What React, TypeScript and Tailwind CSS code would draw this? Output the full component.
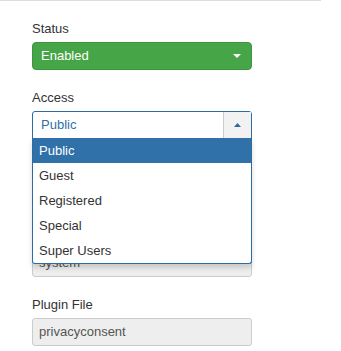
import React from "react";

const font = { fontFamily: '"Liberation Sans", Arial, sans-serif' };

function Label({ children }: { children?: React.ReactNode }) {
  return <div className="h-[18px] leading-[18px] text-[13px] text-[#333] mb-[4px]">{children}</div>;
}

function Disabled({ value }: { value?: string }) {
  return (
    <div className="h-[28px] w-[220px] rounded-[3px] border border-[#ccc] bg-[#eee] px-[6px] text-[13px] leading-[26px] text-[#555]">
      {value}
    </div>
  );
}

export default function App() {
  const items = ["Public", "Guest", "Registered", "Special", "Super Users"];
  return (
    <div className="relative h-[351px] w-[341px] bg-white overflow-hidden" style={font}>
      <div className="h-px w-[321px] bg-[#ddd]" />
      <div className="flex flex-col gap-[19px] pl-[32px] pt-[19px]">
        <div>
          <Label>Status</Label>
          <div className="flex h-[28px] w-[220px] items-center justify-between rounded-[4px] border border-[#3f943f] bg-[#46a546] pl-[8px] pr-[10px] text-[13px] text-white">
            <span>Enabled</span>
            <svg width="8" height="4" viewBox="0 0 8 4">
              <path d="M0 0 H8 L4 4 Z" fill="#fff" />
            </svg>
          </div>
        </div>
        <div className="relative z-10">
          <Label>Access</Label>
          <div className="relative w-[220px]">
            <div className="flex h-[28px] w-[220px] items-stretch rounded-t-[3px] border border-[#2d6ca2] bg-white">
              <div className="flex-1 pl-[8px] text-[13px] leading-[26px] text-[#3071a9]">Public</div>
              <div className="flex w-[28px] items-center justify-center border-l border-[#ccc] bg-[#f2f2f2]">
                <svg width="7" height="4" viewBox="0 0 7 4">
                  <path d="M0 4 H7 L3.5 0 Z" fill="#2d6ca2" />
                </svg>
              </div>
            </div>
            <div className="absolute left-0 top-[27px] w-[220px] rounded-b-[3px] border border-t-0 border-[#2d6ca2] bg-white shadow-[0_4px_5px_rgba(0,0,0,0.15)]">
              {items.map((it, i) => (
                <div
                  key={it}
                  className={
                    i === 0
                      ? "h-[25px] bg-[#3071a9] px-[6px] text-[13px] leading-[25px] text-white"
                      : "h-[25px] px-[6px] text-[13px] leading-[25px] text-[#333]"
                  }
                >
                  {it}
                </div>
              ))}
            </div>
          </div>
        </div>
        <div>
          <Label />
          <Disabled />
        </div>
        <div>
          <Label />
          <Disabled value="system" />
        </div>
        <div>
          <Label>Plugin File</Label>
          <Disabled value="privacyconsent" />
        </div>
      </div>
    </div>
  );
}
